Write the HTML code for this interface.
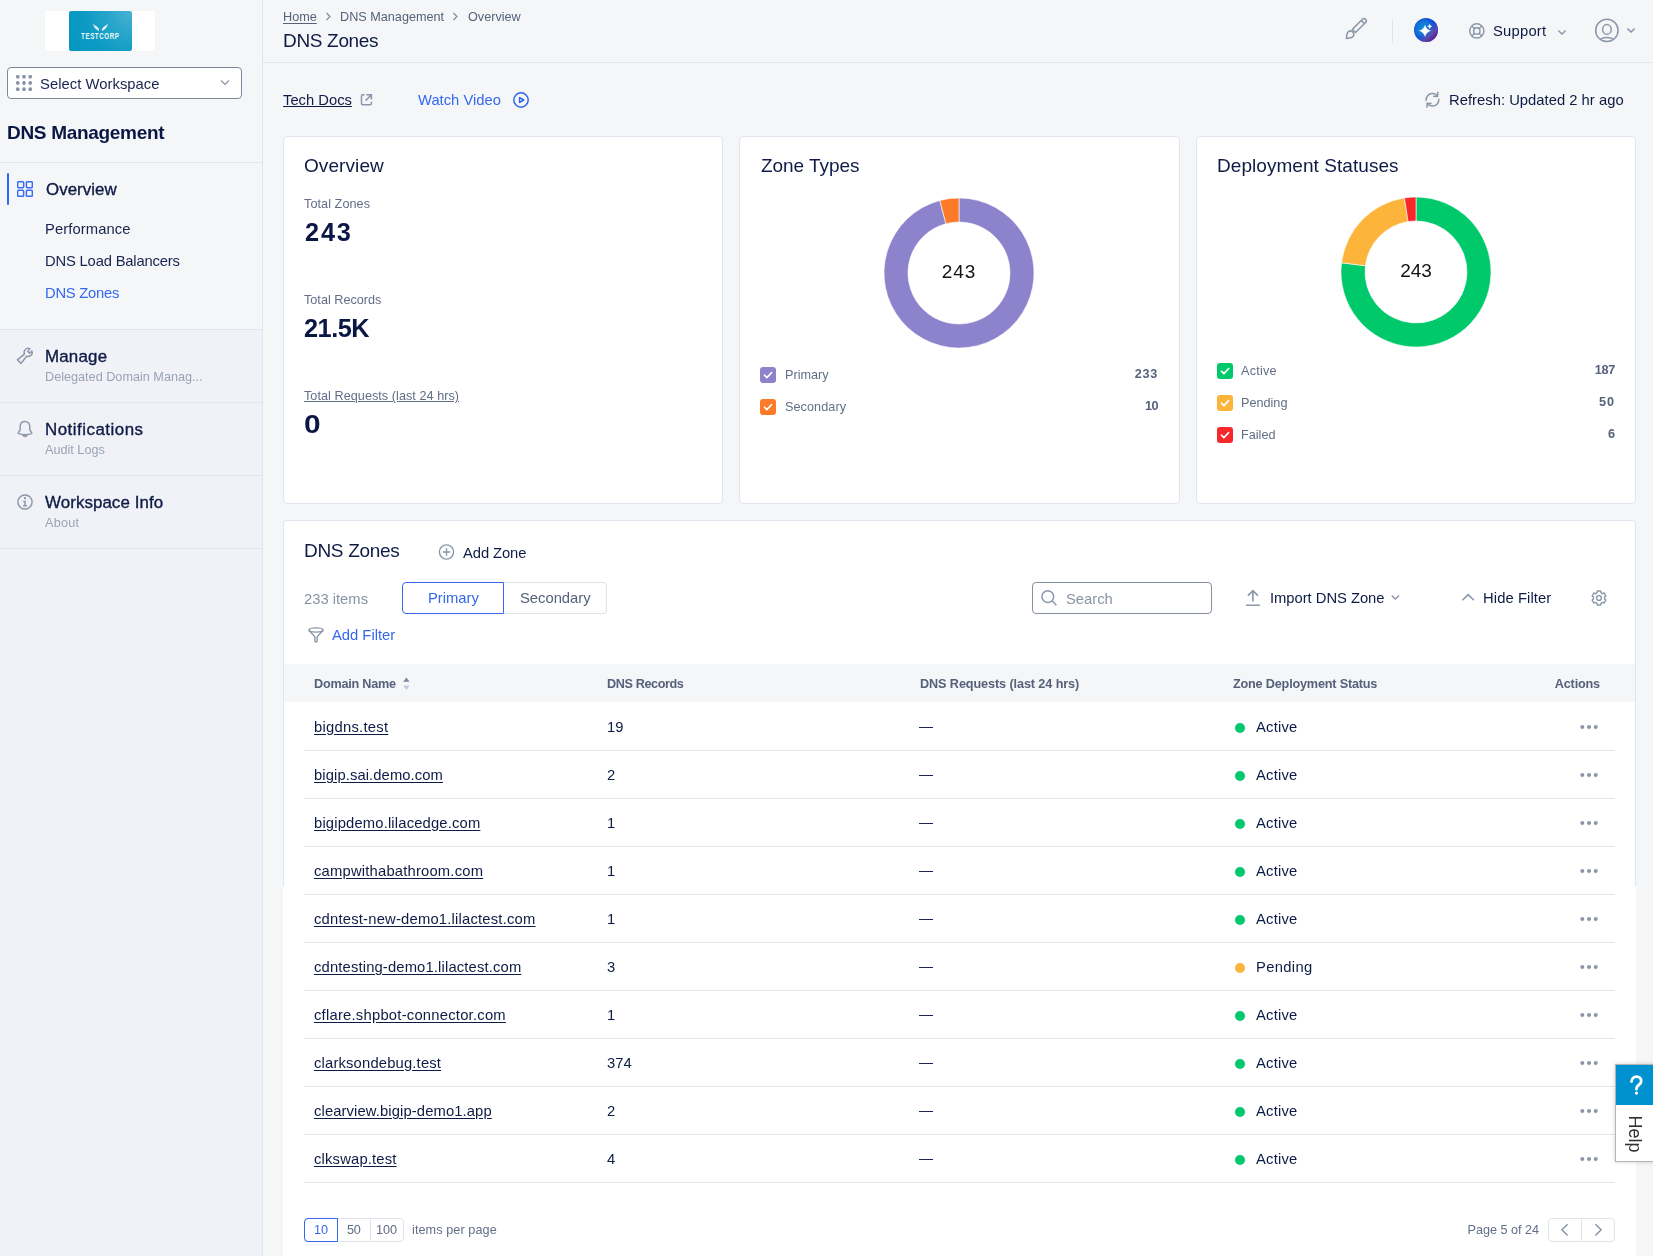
<!DOCTYPE html>
<html><head><meta charset="utf-8">
<style>
*{box-sizing:border-box;margin:0;padding:0}
html,body{width:1653px;height:1256px;overflow:hidden;background:#f5f6f8;font-family:"Liberation Sans",sans-serif}
.r{position:absolute}
.t{position:absolute;white-space:nowrap;line-height:1;font-family:"Liberation Sans",sans-serif;will-change:transform}
</style></head><body>
<div class="r" style="left:0;top:0;width:262px;height:329px;background:#f5f6f8"></div>
<div class="r" style="left:0;top:329px;width:262px;height:927px;background:#f0f2f7"></div>
<div class="r" style="left:262px;top:0;width:1px;height:1256px;background:#e2e6ef"></div>
<div class="r" style="left:0;top:162px;width:262px;height:1px;background:#e1e5ee"></div>
<div class="r" style="left:0;top:329px;width:262px;height:1px;background:#e1e5ee"></div>
<div class="r" style="left:0;top:402px;width:262px;height:1px;background:#e1e5ee"></div>
<div class="r" style="left:0;top:475px;width:262px;height:1px;background:#e1e5ee"></div>
<div class="r" style="left:0;top:548px;width:262px;height:1px;background:#e1e5ee"></div>
<div class="r" style="left:45px;top:11px;width:110px;height:40px;background:#fff"></div>
<div class="r" style="left:69px;top:11px;width:63px;height:40px;border-radius:2px;background:radial-gradient(circle at 100% 0%,#49b2d3 0%,#25a4ca 35%,#0c9ac3 65%,#0497c0 100%)"></div>
<svg class="r" style="left:69px;top:11px" width="63" height="40" viewBox="0 0 63 40"><path d="M24 12.6 C24.8 16.6 27 18.8 29.9 20 C30.4 18.4 29.7 16.9 28.3 15.9 C26.8 14.9 25.2 14.3 24 12.6Z" fill="#e6f4f9"/><path d="M39 12.6 C38.2 16.6 36 18.8 33.1 20 C32.6 18.4 33.3 16.9 34.7 15.9 C36.2 14.9 37.8 14.3 39 12.6Z" fill="#e6f4f9"/></svg>
<div class="r" style="left:81.3px;top:31.6px;font-size:8.8px;line-height:9px;font-weight:700;color:#eef8fb;letter-spacing:0.9px;transform:scaleX(0.7);transform-origin:0 0;white-space:nowrap">TESTCORP</div>
<div class="r" style="left:7px;top:67px;width:235px;height:32px;border:1px solid #7d879c;border-radius:4px;background:#fff"></div>
<svg class="r" style="left:16px;top:75px" width="16" height="16" viewBox="0 0 16 16"><circle cx="1.8" cy="1.8" r="1.9" fill="#8b95a8"/><circle cx="1.8" cy="8.0" r="1.9" fill="#8b95a8"/><circle cx="1.8" cy="14.2" r="1.9" fill="#8b95a8"/><circle cx="8.0" cy="1.8" r="1.9" fill="#8b95a8"/><circle cx="8.0" cy="8.0" r="1.9" fill="#8b95a8"/><circle cx="8.0" cy="14.2" r="1.9" fill="#8b95a8"/><circle cx="14.2" cy="1.8" r="1.9" fill="#8b95a8"/><circle cx="14.2" cy="8.0" r="1.9" fill="#8b95a8"/><circle cx="14.2" cy="14.2" r="1.9" fill="#8b95a8"/></svg>
<svg class="r" style="left:219px;top:77px" width="12" height="12" viewBox="0 0 12 12"><path d="M2 3.5 L6 7.5 L10 3.5" fill="none" stroke="#8b95a8" stroke-width="1.2"/></svg>
<div class="r" style="left:7px;top:173px;width:2px;height:32px;background:#2f66f2;border-radius:1px"></div>
<svg class="r" style="left:17px;top:181px" width="16" height="16" viewBox="0 0 16 16" fill="none" stroke="#3a6ef2" stroke-width="1.5"><rect x="0.65" y="0.65" width="6" height="6" rx="1.2"/><rect x="9.35" y="0.65" width="6" height="6" rx="1.2"/><rect x="0.65" y="9.35" width="6" height="6" rx="1.2"/><rect x="9.35" y="9.35" width="6" height="6" rx="1.2"/></svg>
<svg class="r" style="left:10px;top:340px" width="30" height="30" viewBox="0 0 30 30" fill="none" stroke="#8d98ab" stroke-width="1.5" stroke-linejoin="round"><path d="M7.4 19.8 L14.4 14.2 C13.7 11.9 14.7 9.4 17.1 8.4 C18 8.1 19 8.1 19.9 8.6 L17.8 11.4 L19.7 13.3 L21.9 11.1 C22.5 12.2 22.4 13.6 21.6 14.7 C20.6 16 18.7 16.7 16.6 16.3 L11.1 23.4 Z"/></svg>
<svg class="r" style="left:10px;top:414px" width="30" height="30" viewBox="0 0 30 30" fill="none" stroke="#8d98ab" stroke-width="1.5" stroke-linejoin="round"><path d="M15 7.6 C12 7.6 10.2 9.8 10.2 12.6 L10.2 15.2 C10.2 16.2 9.6 17 8.8 17.8 C8.2 18.4 8.1 19.3 8.6 19.6 C10.4 20.4 12.6 20.7 15 20.7 C17.4 20.7 19.6 20.4 21.4 19.6 C21.9 19.3 21.8 18.4 21.2 17.8 C20.4 17 19.8 16.2 19.8 15.2 L19.8 12.6 C19.8 9.8 18 7.6 15 7.6Z"/><path d="M12.6 21.4 C13 22.4 13.9 22.8 15 22.8 C16.1 22.8 17 22.4 17.4 21.4Z" fill="#8d98ab" stroke-width="0.8"/></svg>
<svg class="r" style="left:10px;top:487px" width="30" height="30" viewBox="0 0 30 30" fill="none" stroke="#8d98ab" stroke-width="1.5"><circle cx="15" cy="15" r="7.1"/><path d="M13.2 14.4 L15 14.4 L15 18.6 M13 18.7 L17 18.7"/><rect x="14" y="10.2" width="2" height="2" fill="#8d98ab" stroke="none"/></svg>
<div class="r" style="left:263px;top:62px;width:1390px;height:1px;background:#e1e5ee"></div>
<svg class="r" style="left:324.5px;top:12px" width="7" height="10" viewBox="0 0 7 10"><path d="M1.5 1 L5 4.5 L1.5 8" fill="none" stroke="#7d879c" stroke-width="1.1"/></svg>
<svg class="r" style="left:451.5px;top:12px" width="7" height="10" viewBox="0 0 7 10"><path d="M1.5 1 L5 4.5 L1.5 8" fill="none" stroke="#7d879c" stroke-width="1.1"/></svg>
<svg class="r" style="left:1340px;top:14px" width="32" height="32" viewBox="1340 14 32 32" fill="none" stroke="#8b96aa" stroke-width="1.5" stroke-linejoin="round"><g transform="translate(1359.6 25.3) rotate(-45)"><path d="M-8 -2.25 L6.2 -2.25 C7.6 -2.25 8.4 -1.2 8.4 0 C8.4 1.2 7.6 2.25 6.2 2.25 L-8 2.25 Z"/><path d="M4.6 -2.25 L4.6 2.25"/><path d="M-18.6 0 C-16.6 -1.6 -15.2 -3.4 -12.9 -3.4 C-11 -3.4 -9.6 -1.9 -9.6 0 C-9.6 1.9 -11 3.4 -12.9 3.4 C-15.2 3.4 -16.6 1.6 -18.6 0Z"/></g></svg>
<div class="r" style="left:1392px;top:19px;width:1px;height:24px;background:#dfe3ec"></div>
<svg class="r" style="left:1414px;top:18px" width="24" height="24" viewBox="1414 18 24 24" ><defs><radialGradient id="aig" cx="1423" cy="28" r="14" gradientUnits="userSpaceOnUse"><stop offset="0" stop-color="#0b95e0"/><stop offset="0.5" stop-color="#1578d4"/><stop offset="0.8" stop-color="#0a4ee0"/><stop offset="1" stop-color="#0a3fd8"/></radialGradient><linearGradient id="aig2" x1="1416" y1="20" x2="1436" y2="40" gradientUnits="userSpaceOnUse"><stop offset="0" stop-color="#0040e0" stop-opacity="0.4"/><stop offset="0.42" stop-color="#3050c0" stop-opacity="0"/><stop offset="0.72" stop-color="#7a4aa0" stop-opacity="0.7"/><stop offset="1" stop-color="#5a0a7a" stop-opacity="1"/></linearGradient></defs><circle cx="1426" cy="30" r="12" fill="url(#aig)"/><circle cx="1426" cy="30" r="12" fill="url(#aig2)"/><path d="M1425 24.8 Q1426.2 29.6 1431.2 30.8 Q1426.2 32 1425 36.9 Q1423.8 32 1418.8 30.8 Q1423.8 29.6 1425 24.8Z" fill="#fff"/><path d="M1429.7 24.1 Q1430.1 26.1 1432.1 26.5 Q1430.1 26.9 1429.7 28.9 Q1429.3 26.9 1427.3 26.5 Q1429.3 26.1 1429.7 24.1Z" fill="#fff"/></svg>
<svg class="r" style="left:1466px;top:20px" width="22" height="22" viewBox="1466 20 22 22" fill="none" stroke="#8b96aa" stroke-width="1.4"><circle cx="1476.8" cy="30.9" r="7.1"/><circle cx="1476.8" cy="30.9" r="3.2"/><path d="M1471.8 25.9 L1474.5 28.6 M1481.8 25.9 L1479.1 28.6 M1471.8 35.9 L1474.5 33.2 M1481.8 35.9 L1479.1 33.2"/></svg>
<svg class="r" style="left:1555px;top:27px" width="14" height="10" viewBox="1555 27 14 10" fill="none" stroke="#8b96aa" stroke-width="1.4"><path d="M1558.3 30.4 L1562 34 L1565.7 30.4"/></svg>
<svg class="r" style="left:1592px;top:16px" width="30" height="30" viewBox="1592 16 30 30" fill="none" stroke="#8b96aa" stroke-width="1.5"><defs><clipPath id="ucl"><circle cx="1606.9" cy="30.4" r="11.2"/></clipPath></defs><circle cx="1606.9" cy="30.4" r="11.2"/><ellipse cx="1606.9" cy="29.4" rx="4.3" ry="4.9"/><ellipse cx="1606.9" cy="40.6" rx="6.8" ry="3.2" clip-path="url(#ucl)"/></svg>
<svg class="r" style="left:1624px;top:25px" width="14" height="10" viewBox="1624 25 14 10" fill="none" stroke="#8b96aa" stroke-width="1.5"><path d="M1627.4 28.6 L1631 32 L1634.6 28.6"/></svg>
<svg class="r" style="left:356px;top:89px" width="20" height="20" viewBox="356 89 20 20" fill="none" stroke="#8b96aa" stroke-width="1.5"><path d="M364.6 94.8 L362.8 94.8 C362 94.8 361.5 95.3 361.5 96.1 L361.5 103.4 C361.5 104.2 362 104.7 362.8 104.7 L370.1 104.7 C370.9 104.7 371.4 104.2 371.4 103.4 L371.4 101.8"/><path d="M366.4 94.8 L371.4 94.8 L371.4 99.6 M371.2 95 L365.6 100.6"/></svg>
<svg class="r" style="left:510px;top:89px" width="22" height="22" viewBox="510 89 22 22" fill="none" stroke="#2f64f0" stroke-width="1.5"><circle cx="521" cy="100" r="7.2"/><path d="M519.6 97.6 L519.6 102.4 L523.8 100 Z" stroke-linejoin="round"/></svg>
<svg class="r" style="left:1422px;top:88px" width="22" height="22" viewBox="1422 88 22 22" fill="none" stroke="#8b96aa" stroke-width="1.5"><path d="M1426.1 100.9 C1425.6 96.8 1428.4 93.6 1432.3 93.6 C1434.6 93.6 1436.4 94.7 1437.4 96.2"/><path d="M1437.8 91.8 L1437.6 96.4 L1433.2 96.2"/><path d="M1438.8 98.8 C1439.2 102.8 1436.4 106 1432.5 106 C1430.3 106 1428.4 105 1427.4 103.4"/><path d="M1427 107.8 L1427.2 103.2 L1431.6 103.4"/></svg>
<div class="r" style="left:283px;top:136px;width:440px;height:368px;background:#fff;border:1px solid #e1e5ee;border-radius:4px"></div>
<div class="r" style="left:739px;top:136px;width:441px;height:368px;background:#fff;border:1px solid #e1e5ee;border-radius:4px"></div>
<div class="r" style="left:1196px;top:136px;width:440px;height:368px;background:#fff;border:1px solid #e1e5ee;border-radius:4px"></div>
<svg class="r" style="left:879px;top:193px" width="160" height="160" viewBox="0 0 160 160"><path d="M80.000 5.000 A75 75 0 1 1 60.823 7.493 L66.960 30.695 A51 51 0 1 0 80.000 29.000Z" fill="#8d83cc" stroke="#fff" stroke-width="0.6"/><path d="M60.823 7.493 A75 75 0 0 1 80.000 5.000 L80.000 29.000 A51 51 0 0 0 66.960 30.695Z" fill="#fd7a28" stroke="#fff" stroke-width="0.6"/></svg>
<svg class="r" style="left:1336px;top:192px" width="160" height="160" viewBox="0 0 160 160"><path d="M80.000 5.000 A75 75 0 1 1 5.565 70.812 L29.384 73.752 A51 51 0 1 0 80.000 29.000Z" fill="#00c96b" stroke="#fff" stroke-width="0.6"/><path d="M5.565 70.812 A75 75 0 0 1 68.411 5.901 L72.120 29.613 A51 51 0 0 0 29.384 73.752Z" fill="#fdb43a" stroke="#fff" stroke-width="0.6"/><path d="M68.411 5.901 A75 75 0 0 1 80.000 5.000 L80.000 29.000 A51 51 0 0 0 72.120 29.613Z" fill="#f8272b" stroke="#fff" stroke-width="0.6"/></svg>
<div class="r" style="left:760px;top:367px;width:16px;height:16px;border-radius:3px;background:#8d83cc"></div>
<svg class="r" style="left:760px;top:367px" width="16" height="16" viewBox="0 0 16 16"><path d="M4.4 8.2 L6.9 10.6 L11.6 5.6" fill="none" stroke="#fff" stroke-width="1.6" stroke-linecap="round" stroke-linejoin="round"/></svg>
<div class="r" style="left:760px;top:399px;width:16px;height:16px;border-radius:3px;background:#fd7a28"></div>
<svg class="r" style="left:760px;top:399px" width="16" height="16" viewBox="0 0 16 16"><path d="M4.4 8.2 L6.9 10.6 L11.6 5.6" fill="none" stroke="#fff" stroke-width="1.6" stroke-linecap="round" stroke-linejoin="round"/></svg>
<div class="r" style="left:1217px;top:363px;width:16px;height:16px;border-radius:3px;background:#00c96b"></div>
<svg class="r" style="left:1217px;top:363px" width="16" height="16" viewBox="0 0 16 16"><path d="M4.4 8.2 L6.9 10.6 L11.6 5.6" fill="none" stroke="#fff" stroke-width="1.6" stroke-linecap="round" stroke-linejoin="round"/></svg>
<div class="r" style="left:1217px;top:395px;width:16px;height:16px;border-radius:3px;background:#fdb43a"></div>
<svg class="r" style="left:1217px;top:395px" width="16" height="16" viewBox="0 0 16 16"><path d="M4.4 8.2 L6.9 10.6 L11.6 5.6" fill="none" stroke="#fff" stroke-width="1.6" stroke-linecap="round" stroke-linejoin="round"/></svg>
<div class="r" style="left:1217px;top:427px;width:16px;height:16px;border-radius:3px;background:#f8272b"></div>
<svg class="r" style="left:1217px;top:427px" width="16" height="16" viewBox="0 0 16 16"><path d="M4.4 8.2 L6.9 10.6 L11.6 5.6" fill="none" stroke="#fff" stroke-width="1.6" stroke-linecap="round" stroke-linejoin="round"/></svg>
<div class="r" style="left:283px;top:520px;width:1353px;height:800px;background:#fff;border-radius:4px"></div>
<div class="r" style="left:283px;top:520px;width:1353px;height:366px;border:1px solid #e1e5ee;border-bottom:none;border-radius:4px 4px 0 0"></div>
<svg class="r" style="left:436px;top:542px" width="22" height="22" viewBox="436 542 22 22" fill="none" stroke="#8b96aa" stroke-width="1.4"><circle cx="446.5" cy="552" r="7.1"/><path d="M446.5 548.2 L446.5 555.8 M442.7 552 L450.3 552"/></svg>
<div class="r" style="left:503px;top:582px;width:104px;height:32px;border:1px solid #dfe3ec;border-left:none;border-radius:0 4px 4px 0;background:#fff"></div>
<div class="r" style="left:402px;top:582px;width:102px;height:32px;border:1px solid #3568ef;border-radius:4px 0 0 4px;background:#fff"></div>
<svg class="r" style="left:304px;top:624px" width="24" height="24" viewBox="304 624 24 24" fill="none" stroke="#8b96aa" stroke-width="1.4" stroke-linejoin="round"><ellipse cx="316" cy="630" rx="7.1" ry="2.1"/><path d="M308.9 630.2 L314.9 636.9 L314.9 640.6 C314.9 641.6 315.4 642.1 316 642.1 C316.6 642.1 317.1 641.6 317.1 640.6 L317.1 636.9 L323.1 630.2"/></svg>
<div class="r" style="left:1032px;top:582px;width:180px;height:32px;border:1px solid #8690a4;border-radius:4px;background:#fff"></div>
<svg class="r" style="left:1038px;top:586px" width="24" height="24" viewBox="1038 586 24 24" fill="none" stroke="#8b96aa" stroke-width="1.5"><circle cx="1047.8" cy="596.6" r="5.9"/><path d="M1052 600.8 L1056.4 605.2"/></svg>
<svg class="r" style="left:1242px;top:586px" width="22" height="22" viewBox="1242 586 22 22" fill="none" stroke="#8b96aa" stroke-width="1.6"><path d="M1252.9 591 L1252.9 601.6 M1247.9 595.6 L1252.9 590.6 L1257.9 595.6 M1246 605.3 L1259.9 605.3"/></svg>
<svg class="r" style="left:1388px;top:592px" width="14" height="10" viewBox="1388 592 14 10" fill="none" stroke="#8b96aa" stroke-width="1.4"><path d="M1391.7 595.4 L1395.4 599.1 L1399.1 595.4"/></svg>
<svg class="r" style="left:1459px;top:591px" width="18" height="12" viewBox="1459 591 18 12" fill="none" stroke="#8b96aa" stroke-width="1.5"><path d="M1462.4 600.2 L1468.2 594.6 L1474 600.2"/></svg>
<svg class="r" style="left:1587px;top:586px" width="24" height="24" viewBox="1587 586 24 24" fill="none" stroke="#8b96aa" stroke-width="1.4" stroke-linejoin="round"><path d="M1596.25 593.24 L1597.11 592.52 L1597.26 591.01 L1600.74 591.01 L1600.89 592.52 L1601.75 593.24 L1602.81 593.62 L1604.18 593.00 L1605.92 596.02 L1604.69 596.89 L1604.50 598.00 L1604.69 599.11 L1605.92 599.98 L1604.18 603.00 L1602.81 602.38 L1601.75 602.76 L1600.89 603.48 L1600.74 604.99 L1597.26 604.99 L1597.11 603.48 L1596.25 602.76 L1595.19 602.38 L1593.82 603.00 L1592.08 599.98 L1593.31 599.11 L1593.50 598.00 L1593.31 596.89 L1592.08 596.02 L1593.82 593.00 L1595.19 593.62Z"/><circle cx="1599" cy="598" r="2.4"/></svg>
<div class="r" style="left:284px;top:664px;width:1351px;height:38px;background:#f5f6f8"></div>
<svg class="r" style="left:400px;top:674px" width="12" height="20" viewBox="400 674 12 20" ><path d="M406.4 677.4 L409.6 681.8 L403.2 681.8Z" fill="#7b879c"/><path d="M406.4 690 L409.6 685.6 L403.2 685.6Z" fill="#c3c9d9"/></svg>
<div class="r" style="left:919px;top:727px;width:14px;height:1.3px;background:#1b2750"></div>
<div class="r" style="left:1235px;top:723px;width:10px;height:10px;border-radius:50%;background:#00c96b"></div>
<svg class="r" style="left:1580px;top:724px" width="18" height="6" viewBox="0 0 18 6"><circle cx="2.3" cy="3" r="2" fill="#8b95a8"/><circle cx="9" cy="3" r="2" fill="#8b95a8"/><circle cx="15.7" cy="3" r="2" fill="#8b95a8"/></svg>
<div class="r" style="left:304px;top:750px;width:1311px;height:1px;background:#e1e5ee"></div>
<div class="r" style="left:919px;top:775px;width:14px;height:1.3px;background:#1b2750"></div>
<div class="r" style="left:1235px;top:771px;width:10px;height:10px;border-radius:50%;background:#00c96b"></div>
<svg class="r" style="left:1580px;top:772px" width="18" height="6" viewBox="0 0 18 6"><circle cx="2.3" cy="3" r="2" fill="#8b95a8"/><circle cx="9" cy="3" r="2" fill="#8b95a8"/><circle cx="15.7" cy="3" r="2" fill="#8b95a8"/></svg>
<div class="r" style="left:304px;top:798px;width:1311px;height:1px;background:#e1e5ee"></div>
<div class="r" style="left:919px;top:823px;width:14px;height:1.3px;background:#1b2750"></div>
<div class="r" style="left:1235px;top:819px;width:10px;height:10px;border-radius:50%;background:#00c96b"></div>
<svg class="r" style="left:1580px;top:820px" width="18" height="6" viewBox="0 0 18 6"><circle cx="2.3" cy="3" r="2" fill="#8b95a8"/><circle cx="9" cy="3" r="2" fill="#8b95a8"/><circle cx="15.7" cy="3" r="2" fill="#8b95a8"/></svg>
<div class="r" style="left:304px;top:846px;width:1311px;height:1px;background:#e1e5ee"></div>
<div class="r" style="left:919px;top:871px;width:14px;height:1.3px;background:#1b2750"></div>
<div class="r" style="left:1235px;top:867px;width:10px;height:10px;border-radius:50%;background:#00c96b"></div>
<svg class="r" style="left:1580px;top:868px" width="18" height="6" viewBox="0 0 18 6"><circle cx="2.3" cy="3" r="2" fill="#8b95a8"/><circle cx="9" cy="3" r="2" fill="#8b95a8"/><circle cx="15.7" cy="3" r="2" fill="#8b95a8"/></svg>
<div class="r" style="left:304px;top:894px;width:1311px;height:1px;background:#e1e5ee"></div>
<div class="r" style="left:919px;top:919px;width:14px;height:1.3px;background:#1b2750"></div>
<div class="r" style="left:1235px;top:915px;width:10px;height:10px;border-radius:50%;background:#00c96b"></div>
<svg class="r" style="left:1580px;top:916px" width="18" height="6" viewBox="0 0 18 6"><circle cx="2.3" cy="3" r="2" fill="#8b95a8"/><circle cx="9" cy="3" r="2" fill="#8b95a8"/><circle cx="15.7" cy="3" r="2" fill="#8b95a8"/></svg>
<div class="r" style="left:304px;top:942px;width:1311px;height:1px;background:#e1e5ee"></div>
<div class="r" style="left:919px;top:967px;width:14px;height:1.3px;background:#1b2750"></div>
<div class="r" style="left:1235px;top:963px;width:10px;height:10px;border-radius:50%;background:#fdb43a"></div>
<svg class="r" style="left:1580px;top:964px" width="18" height="6" viewBox="0 0 18 6"><circle cx="2.3" cy="3" r="2" fill="#8b95a8"/><circle cx="9" cy="3" r="2" fill="#8b95a8"/><circle cx="15.7" cy="3" r="2" fill="#8b95a8"/></svg>
<div class="r" style="left:304px;top:990px;width:1311px;height:1px;background:#e1e5ee"></div>
<div class="r" style="left:919px;top:1015px;width:14px;height:1.3px;background:#1b2750"></div>
<div class="r" style="left:1235px;top:1011px;width:10px;height:10px;border-radius:50%;background:#00c96b"></div>
<svg class="r" style="left:1580px;top:1012px" width="18" height="6" viewBox="0 0 18 6"><circle cx="2.3" cy="3" r="2" fill="#8b95a8"/><circle cx="9" cy="3" r="2" fill="#8b95a8"/><circle cx="15.7" cy="3" r="2" fill="#8b95a8"/></svg>
<div class="r" style="left:304px;top:1038px;width:1311px;height:1px;background:#e1e5ee"></div>
<div class="r" style="left:919px;top:1063px;width:14px;height:1.3px;background:#1b2750"></div>
<div class="r" style="left:1235px;top:1059px;width:10px;height:10px;border-radius:50%;background:#00c96b"></div>
<svg class="r" style="left:1580px;top:1060px" width="18" height="6" viewBox="0 0 18 6"><circle cx="2.3" cy="3" r="2" fill="#8b95a8"/><circle cx="9" cy="3" r="2" fill="#8b95a8"/><circle cx="15.7" cy="3" r="2" fill="#8b95a8"/></svg>
<div class="r" style="left:304px;top:1086px;width:1311px;height:1px;background:#e1e5ee"></div>
<div class="r" style="left:919px;top:1111px;width:14px;height:1.3px;background:#1b2750"></div>
<div class="r" style="left:1235px;top:1107px;width:10px;height:10px;border-radius:50%;background:#00c96b"></div>
<svg class="r" style="left:1580px;top:1108px" width="18" height="6" viewBox="0 0 18 6"><circle cx="2.3" cy="3" r="2" fill="#8b95a8"/><circle cx="9" cy="3" r="2" fill="#8b95a8"/><circle cx="15.7" cy="3" r="2" fill="#8b95a8"/></svg>
<div class="r" style="left:304px;top:1134px;width:1311px;height:1px;background:#e1e5ee"></div>
<div class="r" style="left:919px;top:1159px;width:14px;height:1.3px;background:#1b2750"></div>
<div class="r" style="left:1235px;top:1155px;width:10px;height:10px;border-radius:50%;background:#00c96b"></div>
<svg class="r" style="left:1580px;top:1156px" width="18" height="6" viewBox="0 0 18 6"><circle cx="2.3" cy="3" r="2" fill="#8b95a8"/><circle cx="9" cy="3" r="2" fill="#8b95a8"/><circle cx="15.7" cy="3" r="2" fill="#8b95a8"/></svg>
<div class="r" style="left:304px;top:1182px;width:1311px;height:1px;background:#e1e5ee"></div>
<div class="r" style="left:304px;top:1218px;width:100px;height:24px;border:1px solid #dfe3ec;border-radius:4px;background:#fff"></div>
<div class="r" style="left:370px;top:1219px;width:1px;height:22px;background:#dfe3ec"></div>
<div class="r" style="left:304px;top:1218px;width:34px;height:24px;border:1px solid #3568ef;border-radius:4px 0 0 4px"></div>
<div class="r" style="left:1548px;top:1218px;width:67px;height:24px;border:1px solid #dfe3ec;border-radius:4px;background:#fff"></div>
<div class="r" style="left:1581px;top:1219px;width:1px;height:22px;background:#dfe3ec"></div>
<svg class="r" style="left:1556px;top:1219px" width="50" height="22" viewBox="1556 1219 50 22" fill="none" stroke="#8591a6" stroke-width="1.4"><path d="M1567.6 1224.2 L1561.9 1229.8 L1567.6 1235.4 M1595.4 1224.2 L1601.1 1229.8 L1595.4 1235.4"/></svg>
<div class="r" style="left:1615px;top:1064px;width:45px;height:98px;background:#fff;border:1px solid #b5b5b5;box-shadow:0 0 4px rgba(0,0,0,0.18)"></div>
<div class="r" style="left:1616px;top:1065px;width:44px;height:40px;background:#0092d0"></div>
<svg class="r" style="left:1620px;top:1068px" width="34" height="34" viewBox="1620 1068 34 34" fill="none" stroke="#fff" stroke-width="2.8"><path d="M1631.6 1081.6 C1631.6 1078.4 1633.9 1076.6 1636.5 1076.6 C1639.2 1076.6 1641.2 1078.4 1641.2 1080.9 C1641.2 1083 1640 1084.1 1638.7 1085 C1637.3 1086 1636.5 1086.9 1636.5 1088.6 L1636.5 1089.2" stroke-linecap="round"/><circle cx="1636.5" cy="1093.1" r="1.6" fill="#fff" stroke="none"/></svg>
<div class="r" style="left:1615px;top:1124px;width:40px;height:20px;font-size:18px;line-height:20px;color:#333;text-align:center;transform:rotate(90deg);transform-origin:50% 50%;will-change:transform">Help</div>
<div class="t" style="left:40px;top:77px;font-size:14.77px;color:#17244f;letter-spacing:0.053px;">Select Workspace</div>
<div class="t" style="left:7px;top:123px;font-size:19px;font-weight:700;color:#0a1745;letter-spacing:-0.308px;">DNS Management</div>
<div class="t" style="left:45.7px;top:182px;font-size:16.9px;-webkit-text-stroke:0.35px #0e1b45;color:#0e1b45;letter-spacing:0.029px;">Overview</div>
<div class="t" style="left:45.4px;top:222px;font-size:14.77px;color:#17244f;letter-spacing:0.100px;">Performance</div>
<div class="t" style="left:45.4px;top:254px;font-size:14.77px;color:#17244f;letter-spacing:-0.176px;">DNS Load Balancers</div>
<div class="t" style="left:45.4px;top:286px;font-size:14.77px;color:#3568ef;letter-spacing:-0.250px;">DNS Zones</div>
<div class="t" style="left:45px;top:349px;font-size:16.9px;-webkit-text-stroke:0.35px #0e1b45;color:#0e1b45;letter-spacing:0.200px;">Manage</div>
<div class="t" style="left:45px;top:371px;font-size:12.66px;color:#9aa3b5;">Delegated Domain Manag...</div>
<div class="t" style="left:45px;top:422px;font-size:16.9px;-webkit-text-stroke:0.35px #0e1b45;color:#0e1b45;letter-spacing:0.500px;">Notifications</div>
<div class="t" style="left:45px;top:444px;font-size:12.66px;color:#9aa3b5;">Audit Logs</div>
<div class="t" style="left:45px;top:495px;font-size:16.9px;-webkit-text-stroke:0.35px #0e1b45;color:#0e1b45;letter-spacing:0.077px;">Workspace Info</div>
<div class="t" style="left:45px;top:517px;font-size:12.66px;color:#9aa3b5;letter-spacing:0.250px;">About</div>
<div class="t" style="left:283px;top:11px;font-size:12.66px;color:#56627c;text-decoration:underline;text-underline-offset:2px">Home</div>
<div class="t" style="left:339.6px;top:11px;font-size:12.66px;color:#56627c;">DNS Management</div>
<div class="t" style="left:467.5px;top:11px;font-size:12.66px;color:#56627c;">Overview</div>
<div class="t" style="left:283.3px;top:31px;font-size:19px;color:#0e1b45;letter-spacing:-0.325px;">DNS Zones</div>
<div class="t" style="left:1493.2px;top:24px;font-size:14.77px;color:#0e1b45;letter-spacing:0.233px;">Support</div>
<div class="t" style="left:283px;top:93px;font-size:14.77px;color:#0e1b45;text-decoration:underline;text-underline-offset:1px">Tech Docs</div>
<div class="t" style="left:417.6px;top:93px;font-size:14.77px;color:#3568ef;">Watch Video</div>
<div class="t" style="left:1448.8px;top:93px;font-size:14.77px;color:#0e1b45;letter-spacing:0.025px;">Refresh: Updated 2 hr ago</div>
<div class="t" style="left:304.2px;top:156px;font-size:19px;color:#0e1b45;letter-spacing:0.086px;">Overview</div>
<div class="t" style="left:304.4px;top:198px;font-size:12.66px;color:#626e88;letter-spacing:0.060px;">Total Zones</div>
<div class="t" style="left:305px;top:220px;font-size:25.3px;font-weight:700;color:#0a1745;letter-spacing:1.850px;">243</div>
<div class="t" style="left:304.2px;top:294px;font-size:12.66px;color:#626e88;">Total Records</div>
<div class="t" style="left:304.2px;top:316px;font-size:25.3px;font-weight:700;color:#0a1745;letter-spacing:-0.500px;">21.5K</div>
<div class="t" style="left:304.2px;top:390.3px;font-size:12.66px;color:#626e88;letter-spacing:0.037px;text-decoration:underline;text-underline-offset:1px">Total Requests (last 24 hrs)</div>
<div class="t" style="left:304.2px;top:412px;font-size:25.3px;font-weight:700;color:#0a1745;transform:scaleX(1.18);transform-origin:0 0">0</div>
<div class="t" style="left:760.6px;top:156px;font-size:19px;color:#0e1b45;letter-spacing:-0.044px;">Zone Types</div>
<div class="t" style="left:659px;width:600px;text-align:center;top:262px;font-size:19px;color:#111;letter-spacing:1.000px;">243</div>
<div class="t" style="left:784.8px;top:369px;font-size:12.66px;color:#626e88;">Primary</div>
<div class="t" style="left:784.8px;top:401px;font-size:12.66px;color:#626e88;letter-spacing:0.062px;">Secondary</div>
<div class="t" style="left:558.3px;width:600px;text-align:right;top:368px;font-size:12.66px;font-weight:700;color:#56627a;letter-spacing:0.750px;">233</div>
<div class="t" style="left:558.3px;width:600px;text-align:right;top:400px;font-size:12.66px;font-weight:700;color:#56627a;letter-spacing:-0.500px;">10</div>
<div class="t" style="left:1217.2px;top:156px;font-size:19px;color:#0e1b45;letter-spacing:0.056px;">Deployment Statuses</div>
<div class="t" style="left:1116px;width:600px;text-align:center;top:261px;font-size:19px;color:#111;">243</div>
<div class="t" style="left:1241.2px;top:365px;font-size:12.66px;color:#626e88;letter-spacing:0.200px;">Active</div>
<div class="t" style="left:1241.2px;top:397px;font-size:12.66px;color:#626e88;">Pending</div>
<div class="t" style="left:1241.2px;top:429px;font-size:12.66px;color:#626e88;">Failed</div>
<div class="t" style="left:1014.7px;width:600px;text-align:right;top:364px;font-size:12.66px;font-weight:700;color:#56627a;letter-spacing:-0.250px;">187</div>
<div class="t" style="left:1014.7px;width:600px;text-align:right;top:396px;font-size:12.66px;font-weight:700;color:#56627a;letter-spacing:1.000px;">50</div>
<div class="t" style="left:1014.7px;width:600px;text-align:right;top:428px;font-size:12.66px;font-weight:700;color:#56627a;">6</div>
<div class="t" style="left:304.3px;top:541.4px;font-size:19px;color:#0e1b45;letter-spacing:-0.300px;">DNS Zones</div>
<div class="t" style="left:463px;top:546px;font-size:14.77px;color:#0e1b45;letter-spacing:-0.086px;">Add Zone</div>
<div class="t" style="left:304.3px;top:592px;font-size:14.77px;color:#8a93a6;">233 items</div>
<div class="t" style="left:428px;top:591px;font-size:14.77px;color:#3568ef;">Primary</div>
<div class="t" style="left:519.8px;top:591px;font-size:14.77px;color:#55617a;">Secondary</div>
<div class="t" style="left:332.2px;top:628px;font-size:14.77px;color:#3568ef;">Add Filter</div>
<div class="t" style="left:1065.6px;top:591.7px;font-size:14.77px;color:#8a93a6;">Search</div>
<div class="t" style="left:1269.7px;top:591px;font-size:14.77px;color:#0e1b45;letter-spacing:-0.029px;">Import DNS Zone</div>
<div class="t" style="left:1482.9px;top:591px;font-size:14.77px;color:#0e1b45;letter-spacing:0.100px;">Hide Filter</div>
<div class="t" style="left:314.1px;top:678.2px;font-size:12.66px;font-weight:700;color:#55617a;letter-spacing:-0.230px;">Domain Name</div>
<div class="t" style="left:606.6px;top:678.2px;font-size:12.66px;font-weight:700;color:#55617a;letter-spacing:-0.400px;">DNS Records</div>
<div class="t" style="left:919.5px;top:678.2px;font-size:12.66px;font-weight:700;color:#55617a;letter-spacing:-0.100px;">DNS Requests (last 24 hrs)</div>
<div class="t" style="left:1232.5px;top:678.2px;font-size:12.66px;font-weight:700;color:#55617a;letter-spacing:-0.190px;">Zone Deployment Status</div>
<div class="t" style="left:999.8px;width:600px;text-align:right;top:678.2px;font-size:12.66px;font-weight:700;color:#55617a;letter-spacing:-0.167px;">Actions</div>
<div class="t" style="left:314.3px;top:720px;font-size:14.77px;color:#0e1b45;letter-spacing:0.260px;text-decoration:underline;text-underline-offset:1.5px">bigdns.test</div>
<div class="t" style="left:607px;top:720px;font-size:14.77px;color:#0e1b45;">19</div>
<div class="t" style="left:1256.3px;top:720px;font-size:14.77px;color:#0e1b45;letter-spacing:0.200px;">Active</div>
<div class="t" style="left:314.3px;top:768px;font-size:14.77px;color:#0e1b45;letter-spacing:0.100px;text-decoration:underline;text-underline-offset:1.5px">bigip.sai.demo.com</div>
<div class="t" style="left:607px;top:768px;font-size:14.77px;color:#0e1b45;">2</div>
<div class="t" style="left:1256.3px;top:768px;font-size:14.77px;color:#0e1b45;letter-spacing:0.200px;">Active</div>
<div class="t" style="left:314.3px;top:816px;font-size:14.77px;color:#0e1b45;letter-spacing:0.168px;text-decoration:underline;text-underline-offset:1.5px">bigipdemo.lilacedge.com</div>
<div class="t" style="left:607px;top:816px;font-size:14.77px;color:#0e1b45;">1</div>
<div class="t" style="left:1256.3px;top:816px;font-size:14.77px;color:#0e1b45;letter-spacing:0.200px;">Active</div>
<div class="t" style="left:314.3px;top:864px;font-size:14.77px;color:#0e1b45;letter-spacing:0.200px;text-decoration:underline;text-underline-offset:1.5px">campwithabathroom.com</div>
<div class="t" style="left:607px;top:864px;font-size:14.77px;color:#0e1b45;">1</div>
<div class="t" style="left:1256.3px;top:864px;font-size:14.77px;color:#0e1b45;letter-spacing:0.200px;">Active</div>
<div class="t" style="left:314.3px;top:912px;font-size:14.77px;color:#0e1b45;letter-spacing:0.210px;text-decoration:underline;text-underline-offset:1.5px">cdntest-new-demo1.lilactest.com</div>
<div class="t" style="left:607px;top:912px;font-size:14.77px;color:#0e1b45;">1</div>
<div class="t" style="left:1256.3px;top:912px;font-size:14.77px;color:#0e1b45;letter-spacing:0.200px;">Active</div>
<div class="t" style="left:314.3px;top:960px;font-size:14.77px;color:#0e1b45;letter-spacing:0.155px;text-decoration:underline;text-underline-offset:1.5px">cdntesting-demo1.lilactest.com</div>
<div class="t" style="left:607px;top:960px;font-size:14.77px;color:#0e1b45;">3</div>
<div class="t" style="left:1256.3px;top:960px;font-size:14.77px;color:#0e1b45;letter-spacing:0.333px;">Pending</div>
<div class="t" style="left:314.3px;top:1008px;font-size:14.77px;color:#0e1b45;letter-spacing:0.238px;text-decoration:underline;text-underline-offset:1.5px">cflare.shpbot-connector.com</div>
<div class="t" style="left:607px;top:1008px;font-size:14.77px;color:#0e1b45;">1</div>
<div class="t" style="left:1256.3px;top:1008px;font-size:14.77px;color:#0e1b45;letter-spacing:0.200px;">Active</div>
<div class="t" style="left:314.3px;top:1056px;font-size:14.77px;color:#0e1b45;letter-spacing:0.176px;text-decoration:underline;text-underline-offset:1.5px">clarksondebug.test</div>
<div class="t" style="left:607px;top:1056px;font-size:14.77px;color:#0e1b45;">374</div>
<div class="t" style="left:1256.3px;top:1056px;font-size:14.77px;color:#0e1b45;letter-spacing:0.200px;">Active</div>
<div class="t" style="left:314.3px;top:1104px;font-size:14.77px;color:#0e1b45;letter-spacing:0.117px;text-decoration:underline;text-underline-offset:1.5px">clearview.bigip-demo1.app</div>
<div class="t" style="left:607px;top:1104px;font-size:14.77px;color:#0e1b45;">2</div>
<div class="t" style="left:1256.3px;top:1104px;font-size:14.77px;color:#0e1b45;letter-spacing:0.200px;">Active</div>
<div class="t" style="left:314.3px;top:1152px;font-size:14.77px;color:#0e1b45;letter-spacing:0.182px;text-decoration:underline;text-underline-offset:1.5px">clkswap.test</div>
<div class="t" style="left:607px;top:1152px;font-size:14.77px;color:#0e1b45;">4</div>
<div class="t" style="left:1256.3px;top:1152px;font-size:14.77px;color:#0e1b45;letter-spacing:0.200px;">Active</div>
<div class="t" style="left:314px;top:1224px;font-size:12.66px;color:#3568ef;">10</div>
<div class="t" style="left:347.2px;top:1224px;font-size:12.66px;color:#5f6b85;letter-spacing:-0.300px;">50</div>
<div class="t" style="left:376.3px;top:1224px;font-size:12.66px;color:#5f6b85;">100</div>
<div class="t" style="left:412.4px;top:1224px;font-size:12.66px;color:#626e88;letter-spacing:0.077px;">items per page</div>
<div class="t" style="left:939px;width:600px;text-align:right;top:1224px;font-size:12.66px;color:#626e88;letter-spacing:-0.027px;">Page 5 of 24</div>
</body></html>
